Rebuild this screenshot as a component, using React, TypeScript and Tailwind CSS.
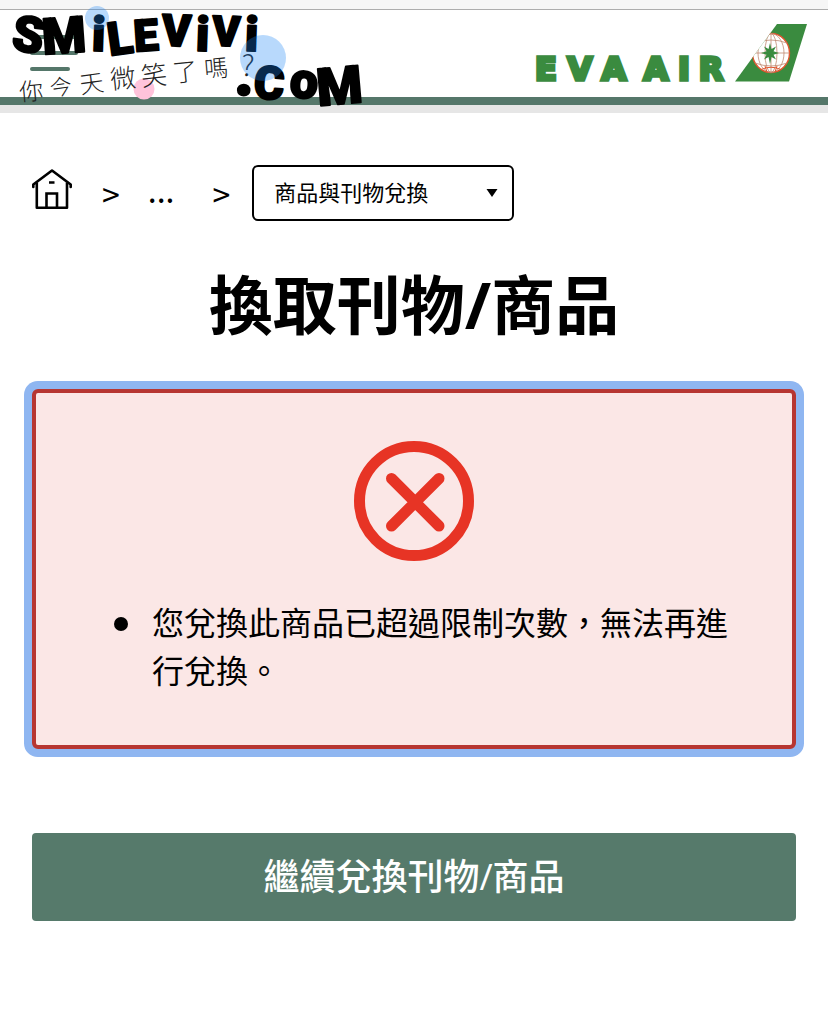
import { memo } from 'react';

interface Glyph {
    char: string;
    x: number;
    y: number;
    size: number;
    angle: number;
}

const TITLE_GLYPHS: Glyph[] = [
    { char: 'S', x: 26, y: 52, size: 50, angle: 8 },
    { char: 'M', x: 65, y: 53, size: 50, angle: -4 },
    { char: 'i', x: 98, y: 51, size: 48, angle: 2 },
    { char: 'L', x: 122, y: 54, size: 46, angle: -8 },
    { char: 'E', x: 147, y: 51, size: 44, angle: -4 },
    { char: 'V', x: 176, y: 46, size: 44, angle: 2 },
    { char: 'i', x: 202, y: 51, size: 48, angle: 2 },
    { char: 'V', x: 226, y: 46, size: 42, angle: 2 },
    { char: 'i', x: 251, y: 51, size: 48, angle: 2 },
    { char: '.', x: 244, y: 95, size: 64, angle: 0 },
    { char: 'C', x: 268, y: 99, size: 46, angle: 4 },
    { char: 'o', x: 303, y: 98, size: 50, angle: 4 },
    { char: 'M', x: 341, y: 104, size: 52, angle: -5 },
];

const SLOGAN_GLYPHS: Glyph[] = [
    { char: '你', x: 32, y: 100, size: 24, angle: -5 },
    { char: '今', x: 62, y: 95, size: 22, angle: -8 },
    { char: '天', x: 93, y: 92, size: 24, angle: -8 },
    { char: '微', x: 124, y: 88, size: 26, angle: -6 },
    { char: '笑', x: 155, y: 85, size: 26, angle: -6 },
    { char: '了', x: 186, y: 81, size: 25, angle: -6 },
    { char: '嗎', x: 217, y: 77, size: 24, angle: -5 },
    { char: '?', x: 247, y: 76, size: 29, angle: 4 },
];

/**
 * 部落格浮水印
 */
const Watermark = memo(() => (
    <svg
        className="pointer-events-none absolute left-0 top-0"
        width="380"
        height="130"
        viewBox="0 0 380 130"
        aria-label="smilevivi.com"
    >
        <circle cx="144" cy="89" r="10.5" fill="#ffc3db" />
        <g
            className="font-['Roboto',sans-serif] font-black"
            textAnchor="middle"
            stroke="#000"
            strokeWidth="2"
            strokeLinejoin="round"
        >
            {TITLE_GLYPHS.map((g, i) => (
                <text key={i} fontSize={g.size} transform={`translate(${g.x} ${g.y}) rotate(${g.angle})`}>
                    {g.char}
                </text>
            ))}
        </g>
        <g className="font-['Noto_Sans_CJK_TC',sans-serif] font-light" textAnchor="middle" fill="#222">
            {SLOGAN_GLYPHS.map((g, i) => (
                <text key={i} fontSize={g.size} transform={`translate(${g.x} ${g.y}) rotate(${g.angle})`}>
                    {g.char}
                </text>
            ))}
        </g>
        <circle cx="97" cy="18" r="12" fill="#1a85f5" opacity="0.31" />
        <circle cx="263" cy="58" r="23" fill="#1a85f5" opacity="0.31" />
    </svg>
));

Watermark.displayName = 'Watermark';

/**
 * 航空公司標誌
 */
const Logo = () => (
    <svg width="276" height="72" viewBox="0 0 276 72" aria-label="EVA AIR">
        <text
            className="font-['DejaVu_Sans',sans-serif] font-bold"
            x="15 49 83 125 153 180"
            y="56"
            fontSize="32"
            fill="#3a8b3f"
            stroke="#3a8b3f"
            strokeWidth="3.5"
            textAnchor="middle"
        >
            EVAAIR
        </text>
        <defs>
            <clipPath id="tail">
                <path d="M246 0H276L258 57.5H204Z" />
            </clipPath>
        </defs>
        <path d="M246 0H276L258 57.5H204Z" fill="#3a8b3f" />
        <g clipPath="url(#tail)">
            <g fill="none" stroke="#e0562f">
                <ellipse cx="240" cy="29" rx="18.5" ry="19.5" fill="#fff" strokeWidth="1.4" />
                <g stroke="#c08a72" strokeWidth="0.8">
                    <ellipse cx="240" cy="29" rx="13" ry="19.5" />
                    <ellipse cx="240" cy="29" rx="6" ry="19.5" />
                    <path d="M240 9.5V48.5M221.5 29H258.5M224 19Q240 13 256 19M224 39Q240 45 256 39" />
                </g>
                <path d="M230 45.5Q240 41 250 45.5M236 48L234 42M244 48L246 42" />
            </g>
            <path
                d="M239 19L240.5 25L245 22.5L242.5 27.2L248 29L242.5 30.8L245 35.5L240.5 33L239 40L237.5 33L233 35.5L235.5 30.8L230 29L235.5 27.2L233 22.5L237.5 25Z"
                fill="#3a8b3f"
            />
        </g>
    </svg>
);

const Header = () => (
    <header className="relative">
        <div className="h-2.5 border-b border-[#adadad] bg-[#f6f6f6]" />
        <div className="flex h-[95px] items-start justify-between border-b-8 border-[#55776a] pl-[30px] pr-[21px] pt-3.5">
            <button type="button" aria-label="選單" className="mt-[11px] flex flex-col gap-3">
                <span className="h-1 w-12 rounded-full bg-[#55776a]" />
                <span className="h-1 w-12 rounded-full bg-[#55776a]" />
                <span className="h-1 w-10 rounded-full bg-[#55776a]" />
            </button>
            <Logo />
        </div>
        <div className="h-2 bg-[#e6e6e6]" />
        <Watermark />
    </header>
);

const Breadcrumb = () => (
    <nav className="flex h-14 items-center px-8" aria-label="導覽路徑">
        <a href="#" aria-label="首頁">
            <svg width="40" height="48" viewBox="0 0 40 48" fill="none" stroke="#000" strokeWidth="2.6">
                <path d="M1.3 18V15.5L20 1.5L38.7 15.5V18" strokeLinecap="round" strokeLinejoin="round" />
                <path d="M4.8 13.5V38.7H35V13.5" strokeLinejoin="round" />
                <path d="M14.5 38.7V24.5H25V38.7M17 13.5H22.5" />
            </svg>
        </a>
        <span className="ml-[30px] text-[32px] leading-none">&gt;</span>
        <a href="#" className="ml-7 pb-2 text-[32px] leading-none">
            ...
        </a>
        <span className="ml-[38px] text-[32px] leading-none">&gt;</span>
        <div className="relative ml-[22px] w-[262px]">
            <select
                aria-label="頁面"
                className="h-14 w-full appearance-none rounded-md border-2 border-black bg-white pb-1 pl-5 text-[22px] text-black"
            >
                <option>商品與刊物兌換</option>
            </select>
            <svg
                className="pointer-events-none absolute right-4 top-6"
                width="12"
                height="8"
                viewBox="0 0 12 8"
            >
                <path d="M0.5 0H11.5L6 8Z" />
            </svg>
        </div>
    </nav>
);

/**
 * 錯誤訊息區塊
 */
const ErrorBox = ({ messages }: { messages: string[] }) => (
    <section
        role="alert"
        className="mx-8 rounded-md border-4 border-[#b73632] bg-[#fbe7e6] p-12 ring-8 ring-[#8fb6f1]"
    >
        <svg
            className="mx-auto"
            width="120"
            height="120"
            viewBox="0 0 120 120"
            fill="none"
            stroke="#e73425"
            strokeWidth="11"
            strokeLinecap="round"
        >
            <circle cx="60" cy="60" r="54.5" />
            <path d="M37.5 37.5L85 85M85 37.5L37.5 85" />
        </svg>
        <ul className="mb-1 mt-9 pl-[30px] text-[32px] leading-[48px]">
            {messages.map((message) => (
                <li
                    key={message}
                    className="flex gap-6 before:mt-5 before:size-3.5 before:shrink-0 before:rounded-full before:bg-black"
                >
                    <span>{message}</span>
                </li>
            ))}
        </ul>
    </section>
);

export default function App() {
    return (
        <div className="min-h-screen bg-white font-['Noto_Sans_CJK_TC',sans-serif] text-black" lang="zh-Hant">
            <Header />
            <main className="pt-[52px]">
                <Breadcrumb />
                <h1 className="mt-9 text-center font-['Open_Sans','Noto_Sans_CJK_TC',sans-serif] text-[64px] font-bold leading-[96px]">
                    換取刊物/商品
                </h1>
                <div className="mt-9">
                    <ErrorBox messages={['您兌換此商品已超過限制次數，無法再進行兌換。']} />
                </div>
                <div className="mt-[84px] px-8">
                    <button
                        type="button"
                        className="h-[88px] w-full rounded bg-[#567a6b] font-['Open_Sans','Noto_Sans_CJK_TC',sans-serif] text-4xl font-medium text-white"
                    >
                        繼續兌換刊物/商品
                    </button>
                </div>
            </main>
        </div>
    );
}
